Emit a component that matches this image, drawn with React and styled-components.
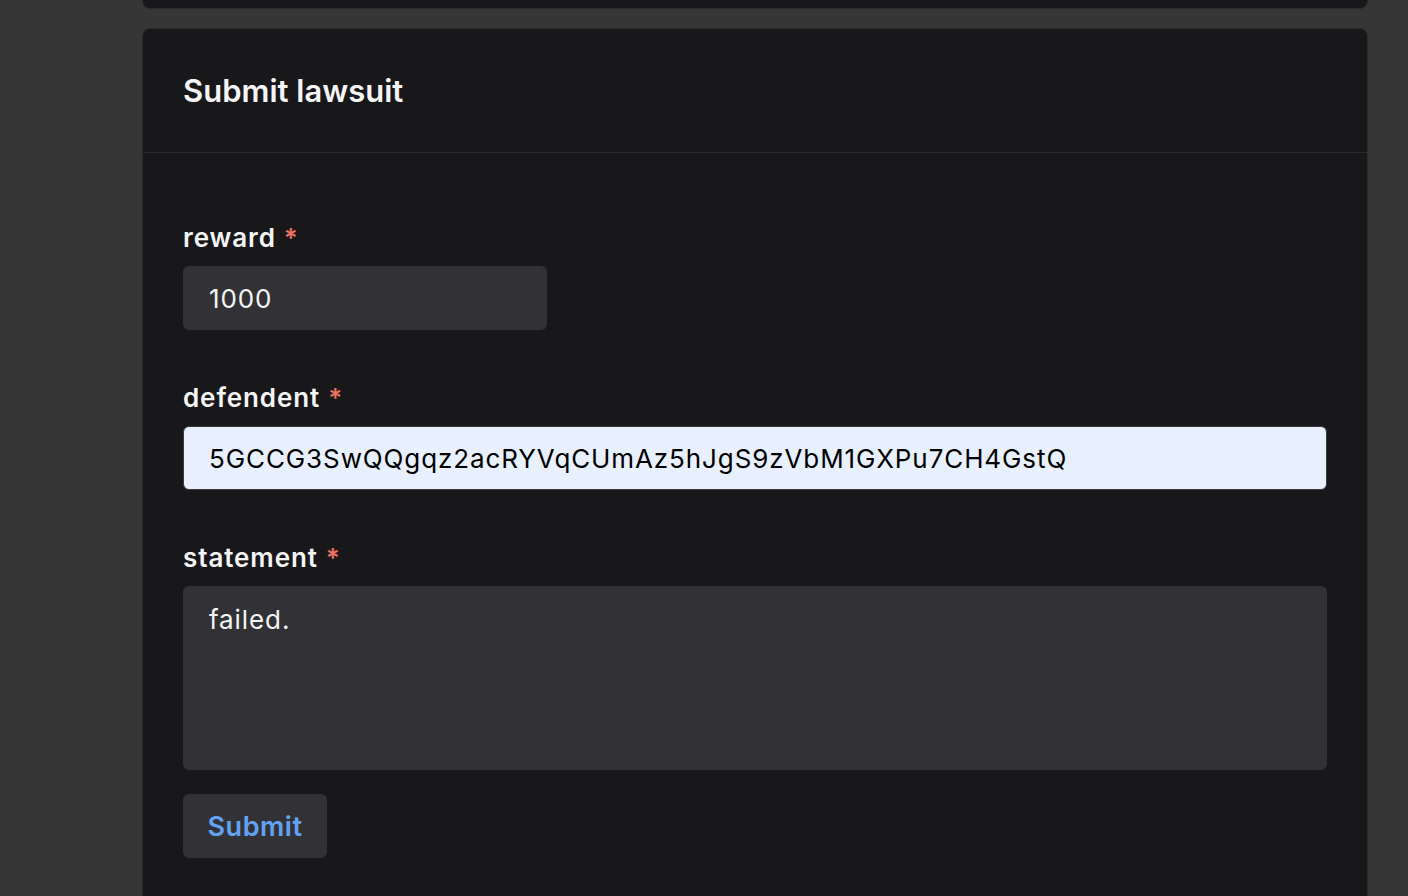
import styled, { createGlobalStyle } from "styled-components";

const GlobalStyle = createGlobalStyle`
  html, body {
    margin: 0;
    padding: 0;
    background: #363636;
    font-family: Inter, "Noto Sans", "Liberation Sans", sans-serif;
    overflow: hidden;
  }
`;

const Page = styled.div`
  width: 1408px;
  height: 896px;
  padding-left: 142px;
  box-sizing: border-box;
  display: flex;
  flex-direction: column;
  gap: 19px;
`;

const PrevCard = styled.div`
  width: 1226px;
  height: 9px;
  box-sizing: border-box;
  background: #18181b;
  border: 1px solid #2b2b2f;
  border-top: none;
  border-radius: 0 0 8px 8px;
`;

const Card = styled.section`
  width: 1226px;
  flex: 1;
  box-sizing: border-box;
  background: #18181b;
  border: 1px solid #2b2b2f;
  border-bottom: none;
  border-radius: 8px 8px 0 0;
  display: flex;
  flex-direction: column;
`;

const Header = styled.header`
  height: 124px;
  box-sizing: border-box;
  padding: 0 40px;
  display: flex;
  align-items: center;
  border-bottom: 1px solid #2a2a2e;
`;

const Title = styled.h2`
  margin: 0;
  font-size: 31px;
  font-weight: 600;
  color: #f4f4f5;
`;

const Body = styled.form`
  padding: 70px 40px 0;
  display: flex;
  flex-direction: column;
`;

const Field = styled.div`
  display: flex;
  flex-direction: column;
  margin-bottom: ${(p) => p.$gap || 53}px;
`;

const Label = styled.label`
  font-size: 26px;
  line-height: 30px;
  font-weight: 600;
  letter-spacing: 0.9px;
  color: #f4f4f5;
  margin-bottom: 13px;
`;

const Required = styled.span`
  color: #e8735f;
  margin-left: 8px;
`;

const Input = styled.input`
  box-sizing: border-box;
  height: 64px;
  width: ${(p) => p.$width || "100%"};
  padding: 0 25px;
  border-radius: 6px;
  border: 1px solid ${(p) => (p.$autofill ? "#3a3a3f" : "transparent")};
  background: ${(p) => (p.$autofill ? "#e8f0fe" : "#323236")};
  color: ${(p) => (p.$autofill ? "#000" : "#f4f4f5")};
  font-family: inherit;
  font-size: 26px;
  letter-spacing: 0.9px;
  outline: none;
`;

const TextArea = styled.textarea`
  box-sizing: border-box;
  height: 184px;
  width: 100%;
  padding: 16px 26px;
  border-radius: 6px;
  border: none;
  background: #323236;
  color: #f4f4f5;
  font-family: inherit;
  font-size: 26px;
  line-height: 36px;
  letter-spacing: 0.9px;
  resize: none;
  outline: none;
`;

const Button = styled.button`
  align-self: flex-start;
  width: 144px;
  height: 64px;
  padding: 0;
  border: none;
  border-radius: 6px;
  background: #323236;
  color: #63a2f3;
  font-family: inherit;
  font-size: 27px;
  font-weight: 600;
  letter-spacing: 0.5px;
`;

export default function App() {
  return (
    <>
      <GlobalStyle />
      <Page>
        <PrevCard />
        <Card>
          <Header>
            <Title>Submit lawsuit</Title>
          </Header>
          <Body onSubmit={(e) => e.preventDefault()}>
            <Field>
              <Label>
                reward<Required>*</Required>
              </Label>
              <Input $width="364px" defaultValue="1000" />
            </Field>
            <Field>
              <Label>
                defendent<Required>*</Required>
              </Label>
              <Input $autofill defaultValue="5GCCG3SwQQgqz2acRYVqCUmAz5hJgS9zVbM1GXPu7CH4GstQ" />
            </Field>
            <Field $gap={24}>
              <Label>
                statement<Required>*</Required>
              </Label>
              <TextArea defaultValue="failed." />
            </Field>
            <Button type="submit">Submit</Button>
          </Body>
        </Card>
      </Page>
    </>
  );
}
